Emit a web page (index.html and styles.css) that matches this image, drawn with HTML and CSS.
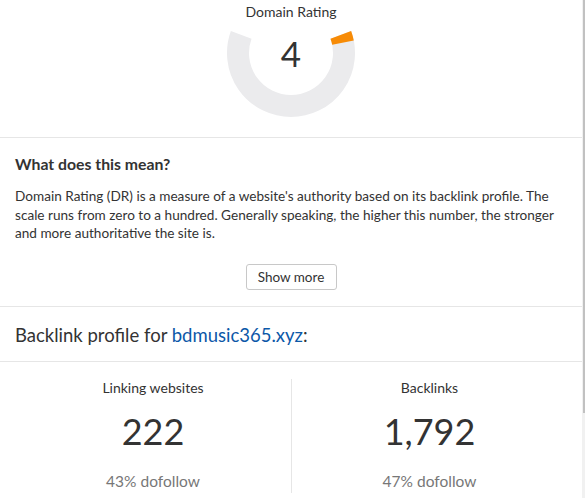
FILE: index.html
```html
<!DOCTYPE html>
<html>
<head>
<meta charset="utf-8">
<link rel="stylesheet" href="styles.css">
</head>
<body>
<div class="page">
  <section class="dr">
    <div class="dr-title">Domain Rating</div>
    <svg class="gauge" width="130" height="96" viewBox="0 0 130 96">
      <path d="M 114.8 12.87 A 53 53 0 1 1 15.2 12.87" fill="none" stroke="#ebebed" stroke-width="22"/>
      <path d="M 114.8 12.87 A 53 53 0 0 1 116.99 20.7" fill="none" stroke="#f78b06" stroke-width="22"/>
      <text x="65" y="45" text-anchor="middle" class="gauge-num">4</text>
    </svg>
  </section>
  <section class="meaning">
    <h3 class="meaning-title">What does this mean?</h3>
    <p class="meaning-text">Domain Rating (DR) is a measure of a website's authority based on its backlink profile. The scale runs from zero to a hundred. Generally speaking, the higher this number, the stronger and more authoritative the site is.</p>
    <div class="btn-row"><button class="btn">Show more</button></div>
  </section>
  <section class="profile">
    <h2 class="profile-title">Backlink profile for <a class="link" href="#">bdmusic365.xyz</a>:</h2>
  </section>
  <section class="stats">
    <div class="stat">
      <div class="stat-label">Linking websites</div>
      <div class="stat-num">222</div>
      <div class="stat-sub">43% dofollow</div>
    </div>
    <div class="stat stat-right">
      <div class="stat-label">Backlinks</div>
      <div class="stat-num">1,792</div>
      <div class="stat-sub">47% dofollow</div>
    </div>
  </section>
</div>
<div class="scrollbar"><div class="thumb"></div></div>
</body>
</html>
```

FILE: styles.css
```css
html, body {
  margin: 0;
  padding: 0;
  background: #fff;
}
body {
  font-family: Lato, "Open Sans", Arial, sans-serif;
  color: #333;
  overflow: hidden;
}
.page {
  width: 582px;
}
.dr {
  height: 137px;
  border-bottom: 1px solid #e6e6e6;
  display: flex;
  flex-direction: column;
  align-items: center;
}
.dr-title {
  margin-top: 3px;
  font-size: 14px;
  line-height: 18px;
  color: #333;
}
.gauge {
  display: block;
  margin-top: 1px;
}
.gauge-num {
  font-family: Lato, sans-serif;
  font-size: 35px;
  fill: #333;
}
.meaning {
  padding: 16px 15px 16px 15px;
  border-bottom: 1px solid #e6e6e6;
}
.meaning-title {
  margin: 0;
  font-size: 15.8px;
  line-height: 20px;
  font-weight: 700;
  color: #333;
}
.meaning-text {
  margin: 13px 0 0 0;
  font-size: 13.6px;
  line-height: 18.7px;
  color: #333;
}
.btn-row {
  display: flex;
  justify-content: center;
  margin-top: 21px;
}
.btn {
  font-family: Lato, sans-serif;
  font-size: 13.5px;
  color: #333;
  background: #fff;
  border: 1px solid #c8c8c8;
  border-radius: 3px;
  width: 91px;
  height: 26px;
  padding: 0;
}
.profile {
  padding: 16px 15px 14px 15px;
  border-bottom: 1px solid #e6e6e6;
}
.profile-title {
  margin: 0;
  font-size: 18.5px;
  line-height: 24px;
  font-weight: 400;
  color: #333;
}
.link {
  color: #0c58a8;
  text-decoration: none;
}
.stats {
  display: grid;
  grid-template-columns: 1fr 1fr;
  padding: 17px 15px 0 15px;
}
.stat {
  display: flex;
  flex-direction: column;
  align-items: center;
  height: 114px;
}
.stat-right {
  border-left: 1px solid #e6e6e6;
}
.stat-label {
  font-size: 14px;
  line-height: 18px;
  color: #333;
}
.stat-num {
  margin-top: 12px;
  font-size: 36px;
  line-height: 44px;
  color: #333;
}
.stat-sub {
  margin-top: 18px;
  font-size: 15.5px;
  line-height: 20px;
  color: #777;
}
.scrollbar {
  position: fixed;
  top: 0;
  right: 0;
  width: 3px;
  height: 100%;
  background: #f1f1f1;
}
.thumb {
  width: 2px;
  height: 413px;
  margin-left: 1px;
  background: #c1c1c1;
}
```
